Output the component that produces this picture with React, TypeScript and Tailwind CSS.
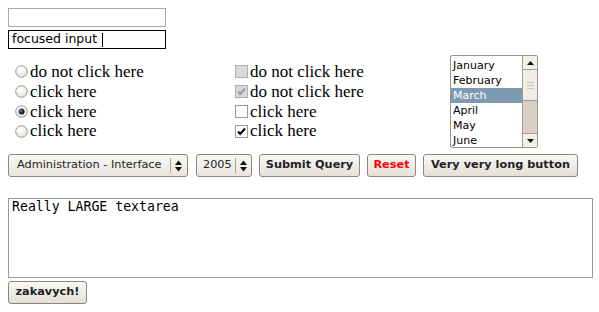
import React from "react";

const Radio = ({ checked }: { checked?: boolean }) => (
  <svg width="13" height="13" viewBox="0 0 13 13" className="shrink-0">
    <defs>
      <radialGradient id="rg" cx="0.4" cy="0.35" r="0.7">
        <stop offset="0" stopColor="#ffffff" />
        <stop offset="1" stopColor="#e2e2e2" />
      </radialGradient>
      <radialGradient id="dot" cx="0.35" cy="0.35" r="0.7">
        <stop offset="0" stopColor="#777" />
        <stop offset="1" stopColor="#000" />
      </radialGradient>
    </defs>
    <circle cx="6.5" cy="6.5" r="5.8" fill="url(#rg)" stroke="#9a9a9a" strokeWidth="1" />
    {checked && <circle cx="6.5" cy="6.5" r="3" fill="url(#dot)" />}
  </svg>
);

const Check = ({ checked, disabled }: { checked?: boolean; disabled?: boolean }) => (
  <svg width="13" height="13" viewBox="0 0 13 13" className="shrink-0">
    <rect
      x="0.5"
      y="0.5"
      width="12"
      height="12"
      fill={disabled ? "#d9d9d9" : "#ffffff"}
      stroke={disabled ? "#b0b0b0" : "#9a9a9a"}
    />
    {checked && (
      <path
        d="M3 6.5 L5.2 9 L10 3.5"
        fill="none"
        stroke={disabled ? "#9c9c9c" : "#000"}
        strokeWidth="2"
      />
    )}
  </svg>
);

const UpDown = () => (
  <svg width="7" height="12" viewBox="0 0 7 12">
    <path d="M3.5 0.5 L7 5 L0 5 Z" fill="#111" />
    <path d="M0 7 L7 7 L3.5 11.5 Z" fill="#111" />
  </svg>
);

const months = ["January", "February", "March", "April", "May", "June"];

function Btn({ children, className }: { children: React.ReactNode; className: string }) {
  return (
    <div
      className={`flex h-[23px] items-center justify-center rounded-[3px] border border-[#8d877c] bg-gradient-to-b from-[#faf9f6] to-[#e4e0d8] text-[11.3px] font-bold ${className}`}
    >
      {children}
    </div>
  );
}

export default function App() {
  return (
    <div className="bg-white p-2 font-['DejaVu_Sans',sans-serif] text-[#222] min-h-[312px]">
      {/* text inputs */}
      <div className="h-[19px] w-[158px] border border-[#a8a8a8]" />
      <div className="mt-[3px] flex h-[19px] w-[158px] items-center border border-black pl-[3px] text-[12.5px] text-black">
        <span>focused input</span>
        <span className="ml-[5px] h-[14px] w-px bg-black" />
      </div>

      {/* radios, checkboxes, listbox */}
      <div className="mt-[6px] flex h-[93px] items-center font-['Liberation_Serif',serif] text-[17px] leading-[19.7px] text-black">
        <div className="ml-[7px] flex w-[220px] flex-col">
          {[
            ["do not click here", false],
            ["click here", false],
            ["click here", true],
            ["click here", false],
          ].map(([label, on], i) => (
            <div key={i} className="flex items-center gap-[2px]">
              <Radio checked={on as boolean} />
              <span>{label as string}</span>
            </div>
          ))}
        </div>
        <div className="flex w-[215px] flex-col">
          <div className="flex items-center gap-[2px]">
            <Check disabled />
            <span>do not click here</span>
          </div>
          <div className="flex items-center gap-[2px]">
            <Check disabled checked />
            <span>do not click here</span>
          </div>
          <div className="flex items-center gap-[2px]">
            <Check />
            <span>click here</span>
          </div>
          <div className="flex items-center gap-[2px]">
            <Check checked />
            <span>click here</span>
          </div>
        </div>

        {/* listbox */}
        <div className="flex h-[93px] w-[88px] overflow-hidden rounded-[2px] border border-[#9d9588] bg-white font-['DejaVu_Sans',sans-serif] text-[11px] leading-[15px]">
          <div className="flex-1 overflow-hidden pt-[1.5px]">
            {months.map((m) => (
              <div
                key={m}
                className={`h-[15px] pl-[2px] ${m === "March" ? "bg-[#7d9ab2] text-white" : "text-black"}`}
              >
                {m}
              </div>
            ))}
          </div>
          <div className="flex w-[15px] flex-col border-l border-[#a49d90] bg-[#d6d0c5]">
            <div className="flex h-[14px] items-center justify-center border-b border-[#a49d90] bg-[#f2f0ea]">
              <svg width="7" height="4" viewBox="0 0 7 4">
                <path d="M3.5 0 L7 4 L0 4 Z" fill="#111" />
              </svg>
            </div>
            <div className="flex h-[31px] flex-col items-center justify-center gap-[2px] border-b border-[#a49d90] bg-[#f0ede6]">
              <div className="h-px w-[7px] bg-[#c8c1b4]" />
              <div className="h-px w-[7px] bg-[#c8c1b4]" />
              <div className="h-px w-[7px] bg-[#c8c1b4]" />
            </div>
            <div className="flex-1" />
            <div className="flex h-[14px] items-center justify-center border-t border-[#a49d90] bg-[#f2f0ea]">
              <svg width="7" height="4" viewBox="0 0 7 4">
                <path d="M0 0 L7 0 L3.5 4 Z" fill="#111" />
              </svg>
            </div>
          </div>
        </div>
      </div>

      {/* selects and buttons */}
      <div className="mt-[6px] flex items-center text-[11.3px]">
        <div className="flex h-[23px] w-[180px] items-center rounded-[3px] border border-[#8d877c] bg-gradient-to-b from-[#faf9f6] to-[#e8e4dd] pl-[8px] pr-[5px]">
          <span className="flex-1">Administration - Interface</span>
          <span className="mr-[4px] h-[15px] w-px bg-[#aaa397]" />
          <UpDown />
        </div>
        <div className="ml-[8px] flex h-[23px] w-[56px] items-center rounded-[3px] border border-[#8d877c] bg-gradient-to-b from-[#faf9f6] to-[#e8e4dd] pl-[6px] pr-[4px]">
          <span className="flex-1">2005</span>
          <span className="mr-[4px] h-[15px] w-px bg-[#aaa397]" />
          <UpDown />
        </div>
        <Btn className="ml-[7px] w-[101px]">Submit Query</Btn>
        <Btn className="ml-[7px] w-[49px] text-[#ff0000]">Reset</Btn>
        <Btn className="ml-[7px] w-[155px]">Very very long button</Btn>
      </div>

      {/* textarea */}
      <div className="mt-[21px] h-[80px] w-[585px] border border-[#999] px-[3px] pt-0 font-['DejaVu_Sans_Mono',monospace] text-[13.2px] leading-[16px] text-black">
        Really LARGE textarea
      </div>
      <Btn className="mt-[3px] w-[79px]">zakavych!</Btn>
    </div>
  );
}
